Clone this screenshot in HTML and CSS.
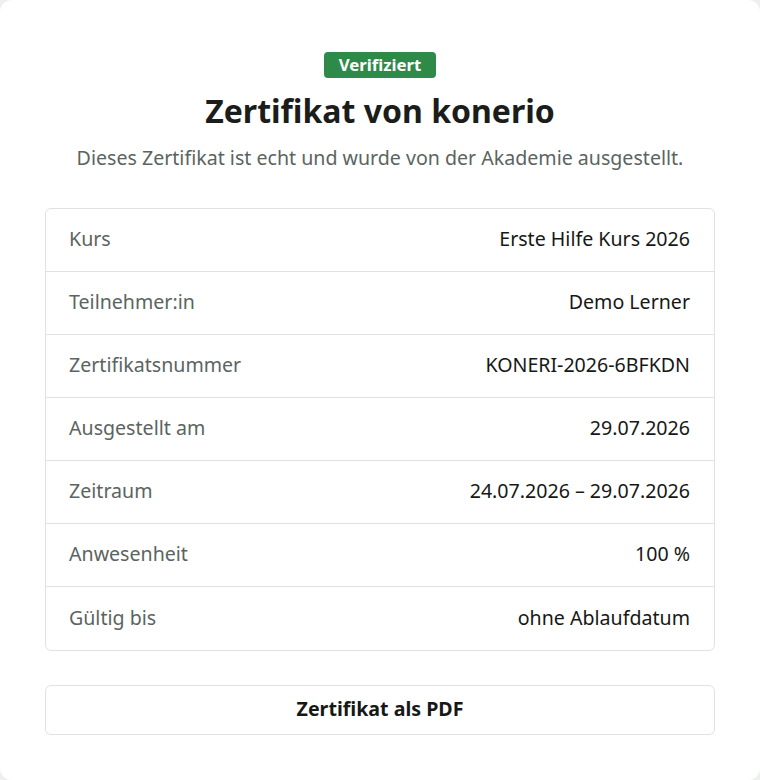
FILE: index.html
```html
<!DOCTYPE html>
<html lang="de">
<head>
<meta charset="utf-8">
<title>Zertifikat von konerio</title>
<link rel="stylesheet" href="styles.css">
</head>
<body>
<main class="card">
  <div class="head">
    <span class="badge">Verifiziert</span>
    <h1 class="title">Zertifikat von konerio</h1>
    <p class="subtitle">Dieses Zertifikat ist echt und wurde von der Akademie ausgestellt.</p>
  </div>
  <dl class="details">
    <div class="row"><dt>Kurs</dt><dd>Erste Hilfe Kurs 2026</dd></div>
    <div class="row"><dt>Teilnehmer:in</dt><dd>Demo Lerner</dd></div>
    <div class="row"><dt>Zertifikatsnummer</dt><dd>KONERI-2026-6BFKDN</dd></div>
    <div class="row"><dt>Ausgestellt am</dt><dd>29.07.2026</dd></div>
    <div class="row"><dt>Zeitraum</dt><dd>24.07.2026 – 29.07.2026</dd></div>
    <div class="row"><dt>Anwesenheit</dt><dd>100 %</dd></div>
    <div class="row"><dt>Gültig bis</dt><dd>ohne Ablaufdatum</dd></div>
  </dl>
  <a class="pdf-button" href="#">Zertifikat als PDF</a>
</main>
</body>
</html>
```
FILE: styles.css
```css
html, body {
  margin: 0;
  padding: 0;
  background: #eef0ee;
}
body {
  font-family: "Noto Sans", "Open Sans", sans-serif;
  color: #1b1d1b;
}
.card {
  box-sizing: border-box;
  width: 760px;
  height: 780px;
  background: #ffffff;
  border-radius: 12px;
  padding: 52px 45px 0;
  display: flex;
  flex-direction: column;
}
.head {
  display: flex;
  flex-direction: column;
  align-items: center;
}
.badge {
  display: inline-block;
  background: #2e8a49;
  color: #ffffff;
  font-size: 16.8px;
  font-weight: 700;
  line-height: 26px;
  height: 26px;
  padding: 0 15px;
  border-radius: 4px;
}
.title {
  margin: 13px 0 0;
  font-size: 32px;
  line-height: 40px;
  font-weight: 700;
  color: #1b1d1b;
}
.subtitle {
  margin: 13px 0 0;
  font-size: 19.6px;
  line-height: 27px;
  color: #5b6460;
}
.details {
  margin: 37px 0 0;
  border: 1px solid #dfe2df;
  border-radius: 6px;
}
.row {
  display: flex;
  justify-content: space-between;
  align-items: center;
  height: 59px;
  padding: 0 24px 3px 23px;
  font-size: 19.6px;
}
.row:last-child {
  height: 60px;
}
.row + .row {
  border-top: 1px solid #dfe2df;
}
.row dt {
  color: #5b6460;
}
.row dd {
  margin: 0;
  color: #161816;
}
.pdf-button {
  margin-top: 34px;
  display: flex;
  align-items: center;
  justify-content: center;
  height: 45px;
  padding-bottom: 3px;
  border: 1px solid #dfe2df;
  border-radius: 6px;
  font-size: 19.6px;
  font-weight: 700;
  color: #161816;
  text-decoration: none;
}
```
